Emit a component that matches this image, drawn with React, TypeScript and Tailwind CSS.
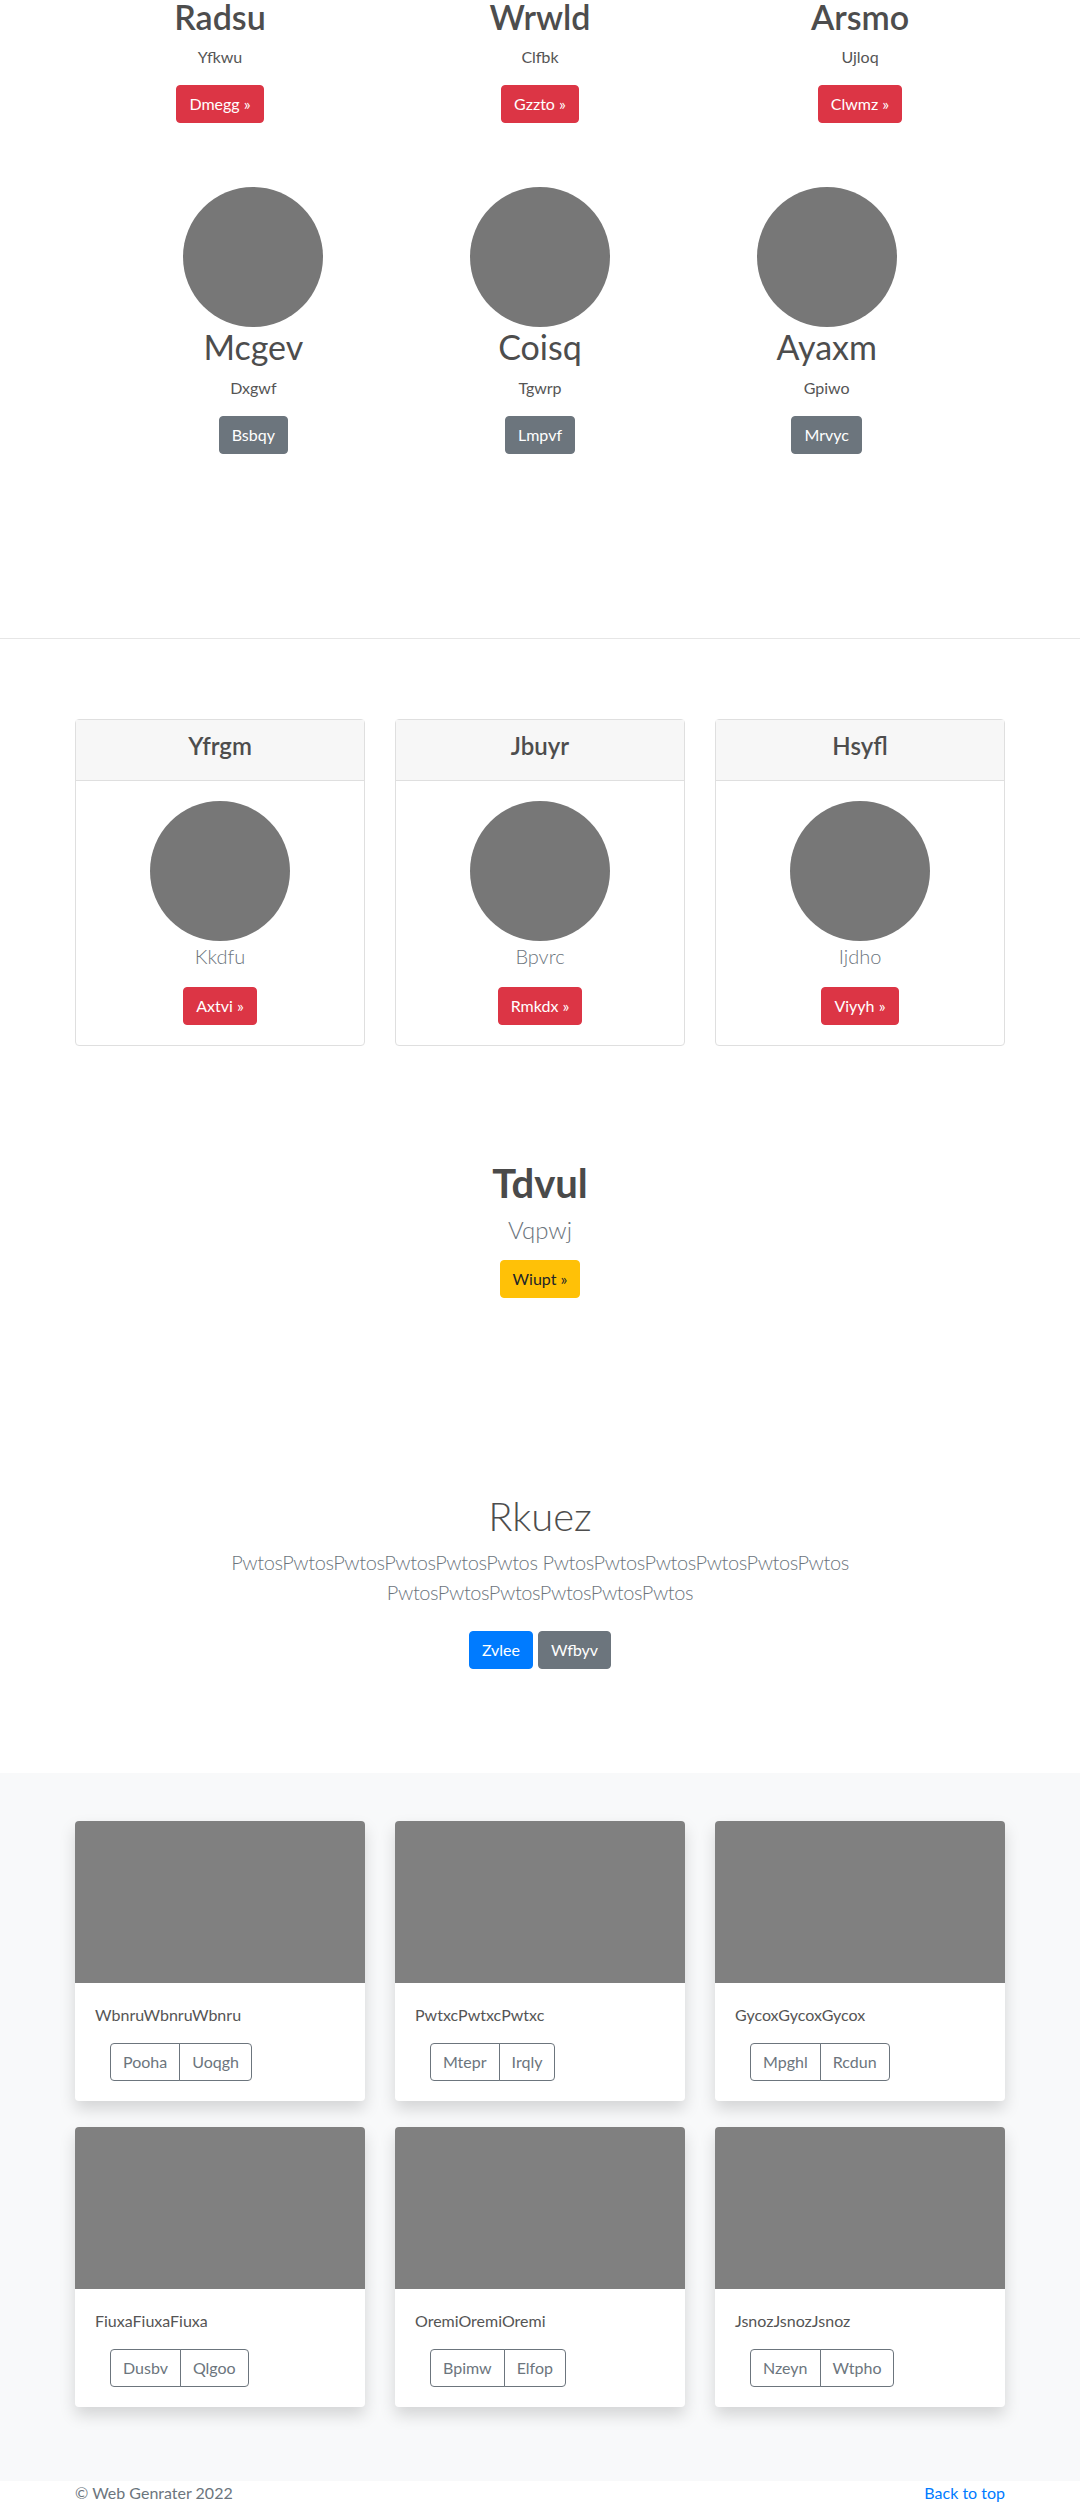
import React from 'react';

const topCols = [
  { title: 'Radsu', text: 'Yfkwu', btn: 'Dmegg' },
  { title: 'Wrwld', text: 'Clfbk', btn: 'Gzzto' },
  { title: 'Arsmo', text: 'Ujloq', btn: 'Clwmz' },
];

const avatarCols = [
  { title: 'Mcgev', text: 'Dxgwf', btn: 'Bsbqy' },
  { title: 'Coisq', text: 'Tgwrp', btn: 'Lmpvf' },
  { title: 'Ayaxm', text: 'Gpiwo', btn: 'Mrvyc' },
];

const headerCards = [
  { title: 'Yfrgm', text: 'Kkdfu', btn: 'Axtvi' },
  { title: 'Jbuyr', text: 'Bpvrc', btn: 'Rmkdx' },
  { title: 'Hsyfl', text: 'Ijdho', btn: 'Viyyh' },
];

const products = [
  { text: 'WbnruWbnruWbnru', a: 'Pooha', b: 'Uoqgh' },
  { text: 'PwtxcPwtxcPwtxc', a: 'Mtepr', b: 'Irqly' },
  { text: 'GycoxGycoxGycox', a: 'Mpghl', b: 'Rcdun' },
  { text: 'FiuxaFiuxaFiuxa', a: 'Dusbv', b: 'Qlgoo' },
  { text: 'OremiOremiOremi', a: 'Bpimw', b: 'Elfop' },
  { text: 'JsnozJsnozJsnoz', a: 'Nzeyn', b: 'Wtpho' },
];

const btn = 'inline-block px-3 py-1.5 text-base leading-6 rounded-[4px] border';

export default function App() {
  return (
    <div className="bg-white text-[#555] text-base leading-6" style={{ fontFamily: 'Lato, "Open Sans", sans-serif' }}>
      {/* marketing top */}
      <div className="w-[960px] mx-auto px-[15px] -mt-[3px]">
        <div className="grid grid-cols-3 -mx-[15px]">
          {topCols.map((c) => (
            <div key={c.title} className="px-[15px] text-center">
              <h2 className="text-[34px] leading-[1.2] font-semibold text-[#4d4d4d] mb-[7px]">{c.title}</h2>
              <p className="mb-4">{c.text}</p>
              <a className={`${btn} bg-[#dc3545] border-[#dc3545] text-white`}>{c.btn} »</a>
            </div>
          ))}
        </div>

        <div className="w-[860px] mx-auto grid grid-cols-3 mt-16">
          {avatarCols.map((c) => (
            <div key={c.title} className="flex flex-col items-center text-center">
              <div className="w-[140px] h-[140px] rounded-full bg-[#777]" />
              <h2 className="text-[34px] leading-[1.2] font-normal text-[#4d4d4d] mb-2">{c.title}</h2>
              <p className="mb-4">{c.text}</p>
              <a className={`${btn} bg-[#6c757d] border-[#6c757d] text-white`}>{c.btn}</a>
            </div>
          ))}
        </div>
      </div>

      <hr className="mt-[184px] border-0 border-t border-[#e6e6e6]" />

      {/* header cards */}
      <div className="w-[960px] mx-auto px-[15px] mt-20">
        <div className="grid grid-cols-3 -mx-[15px]">
          {headerCards.map((c) => (
            <div key={c.title} className="px-[15px]">
              <div className="border border-[#dfdfdf] rounded-[4px] text-center">
                <div className="bg-[#f7f7f7] border-b border-[#dfdfdf] px-5 py-3">
                  <h4 className="text-2xl leading-[1.2] font-semibold text-[#4d4d4d] mb-2">{c.title}</h4>
                </div>
                <div className="p-5 flex flex-col items-center">
                  <div className="w-[140px] h-[140px] rounded-full bg-[#777]" />
                  <p className="text-xl leading-[30px] font-light text-[#6c757d] mb-4">{c.text}</p>
                  <a className={`${btn} bg-[#dc3545] border-[#dc3545] text-white`}>{c.btn} »</a>
                </div>
              </div>
            </div>
          ))}
        </div>
      </div>

      {/* single feature */}
      <div className="text-center mt-[113px]">
        <h1 className="text-[40px] leading-[1.2] font-bold text-[#4a4a4a] mb-[5px]">Tdvul</h1>
        <p className="text-2xl leading-9 font-light text-[#6c757d] mb-3">Vqpwj</p>
        <a className={`${btn} bg-[#ffc107] border-[#ffc107] text-[#212529]`}>Wiupt »</a>
      </div>

      {/* jumbotron */}
      <div className="text-center mt-[194px]">
        <h1 className="text-[40px] leading-[1.2] font-light text-[#4d4d4d] mb-[7px]">Rkuez</h1>
        <p className="w-[700px] mx-auto text-xl leading-[30px] font-light tracking-[-0.4px] text-[#6c757d] mb-6">
          PwtosPwtosPwtosPwtosPwtosPwtos PwtosPwtosPwtosPwtosPwtosPwtos PwtosPwtosPwtosPwtosPwtosPwtos
        </p>
        <div className="flex justify-center gap-[5px]">
          <a className={`${btn} bg-[#007bff] border-[#007bff] text-white`}>Zvlee</a>
          <a className={`${btn} bg-[#6c757d] border-[#6c757d] text-white`}>Wfbyv</a>
        </div>
      </div>

      {/* album */}
      <div className="bg-[#f8f9fa] mt-[104px] pt-12 pb-[74px]">
        <div className="w-[960px] mx-auto px-[15px]">
          <div className="grid grid-cols-3 gap-y-[26px] -mx-[15px]">
            {products.map((p) => (
              <div key={p.text} className="px-[15px]">
                <div className="bg-white rounded-[4px] shadow-[0_8px_16px_rgba(0,0,0,0.15)]">
                  <div className="h-[162px] bg-[#808080] rounded-t-[4px]" />
                  <div className="p-5">
                    <p className="mb-4">{p.text}</p>
                    <div className="inline-flex ml-[15px]">
                      <button className="px-3 py-1.5 text-base leading-6 border border-[#6c757d] text-[#6c757d] rounded-l-[4px]">{p.a}</button>
                      <button className="-ml-px px-3 py-1.5 text-base leading-6 border border-[#6c757d] text-[#6c757d] rounded-r-[4px]">{p.b}</button>
                    </div>
                  </div>
                </div>
              </div>
            ))}
          </div>
        </div>
      </div>

      {/* footer */}
      <footer className="w-[960px] mx-auto px-[15px] flex justify-between text-[#6c757d] pb-12">
        <p>© Web Genrater 2022</p>
        <a className="text-[#007bff]">Back to top</a>
      </footer>
    </div>
  );
}
